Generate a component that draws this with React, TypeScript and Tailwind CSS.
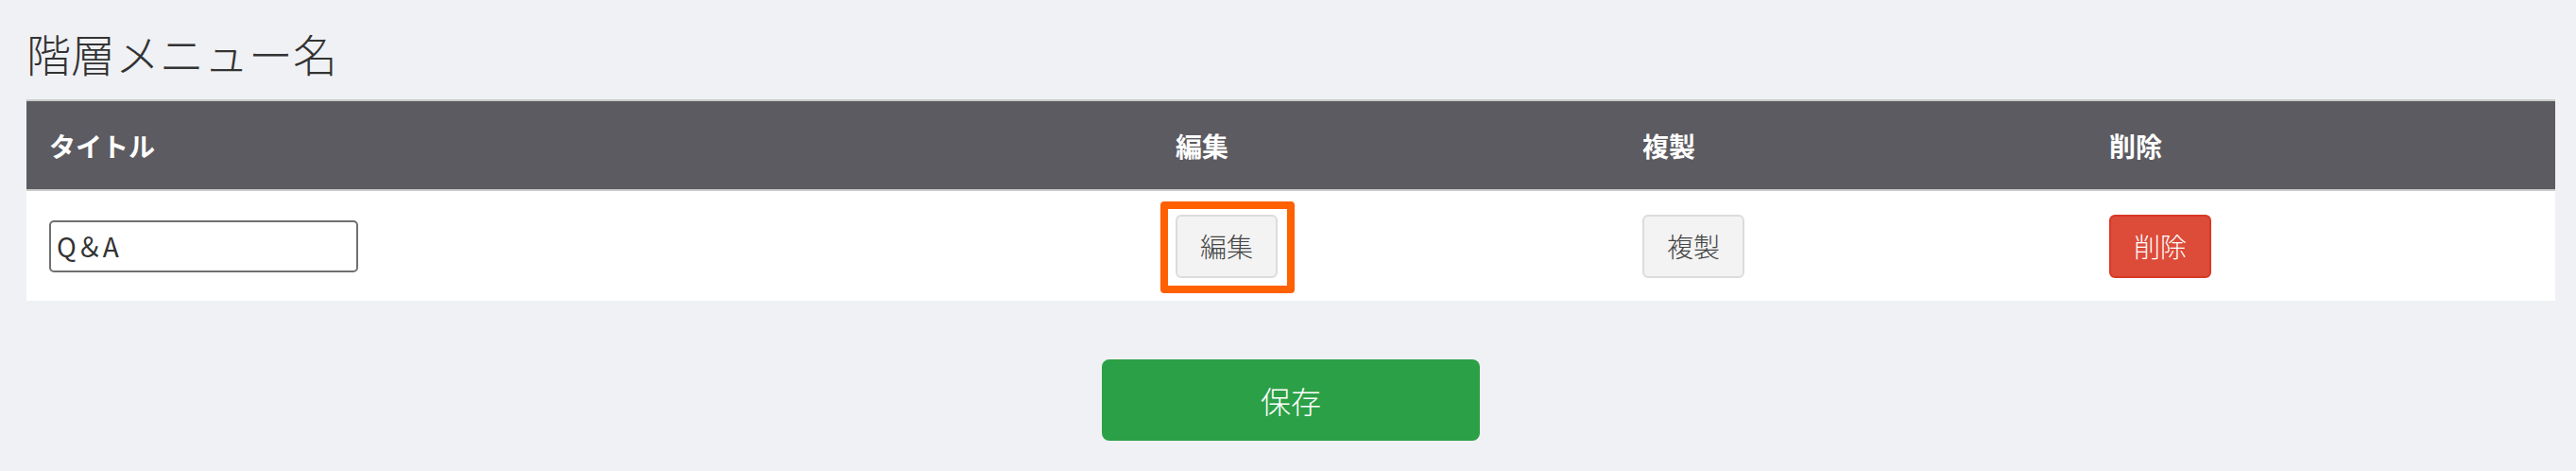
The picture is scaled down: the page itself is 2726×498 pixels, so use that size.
const COLS = "grid grid-cols-[1192px_494px_494px_1fr] items-center";

const HEADERS = ["タイトル", "編集", "複製", "削除"];

function GrayButton({ label }: { label: string }) {
  return (
    <button className="flex h-[67px] w-[108px] items-center justify-center rounded-[6px] border-2 border-[#dcdcdc] bg-[#f3f3f3] text-[28px] font-light text-[#444]">
      {label}
    </button>
  );
}

export default function App() {
  return (
    <div className="min-h-[498px] bg-[#f0f1f4] pl-[28px] pr-[22px] pt-[32px] font-['Noto_Sans_CJK_JP','Noto_Sans',sans-serif]">
      <h1 className="text-[47px] leading-[47px] font-light text-[#333]">階層メニュー名</h1>

      <div className="mt-[26px]">
        <div className={`${COLS} h-[97px] border-y-2 border-[#cbcbcb] bg-[#5c5b61]`}>
          {HEADERS.map((h) => (
            <div key={h} className="px-6 text-[28px] font-bold text-white">
              {h}
            </div>
          ))}
        </div>

        <div className={`${COLS} h-[116px] bg-white`}>
          <div className="px-6">
            <input
              defaultValue="Q＆A"
              className="h-[55px] w-[327px] rounded-[5px] border-2 border-[#707070] bg-white px-[6px] text-[28px] text-[#333] outline-none"
            />
          </div>
          <div className="px-6">
            <div className="relative inline-flex">
              <GrayButton label="編集" />
              <span className="pointer-events-none absolute -top-[14px] -bottom-4 -left-4 -right-[18px] rounded-[4px] border-8 border-[#ff6000]" />
            </div>
          </div>
          <div className="px-6">
            <GrayButton label="複製" />
          </div>
          <div className="px-6">
            <button className="flex h-[67px] w-[108px] items-center justify-center rounded-[6px] border-2 border-[#d73925] bg-[#dd4b39] text-[28px] font-light text-white">
              削除
            </button>
          </div>
        </div>
      </div>

      <div className="flex justify-center pt-[62px] pb-[32px]">
        <button className="h-[86px] w-[400px] rounded-[8px] bg-[#2ca046] text-[32px] font-light text-white">
          保存
        </button>
      </div>
    </div>
  );
}
